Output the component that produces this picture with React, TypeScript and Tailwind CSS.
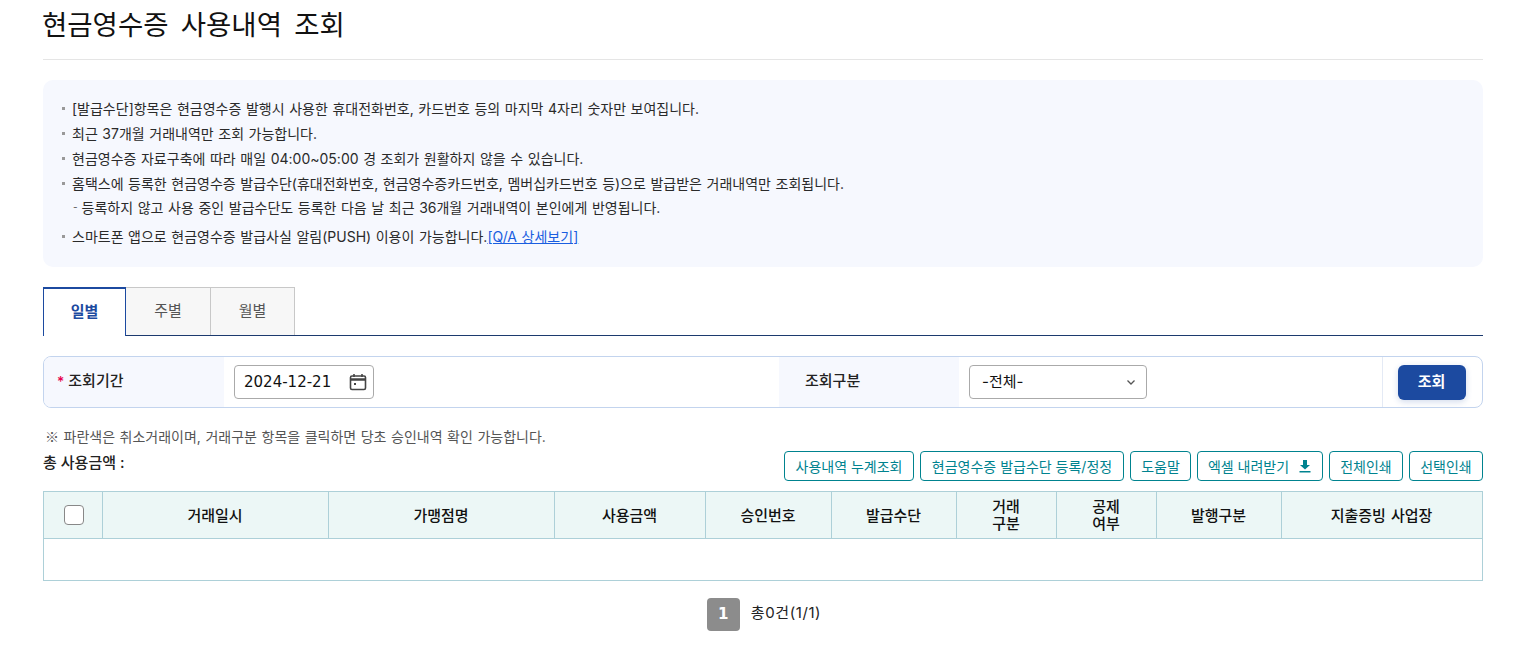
import React from "react";

const font = "font-['Inter','Noto_Sans_CJK_KR',sans-serif]";

const notices = [
  "[발급수단]항목은 현금영수증 발행시 사용한 휴대전화번호, 카드번호 등의 마지막 4자리 숫자만 보여집니다.",
  "최근 37개월 거래내역만 조회 가능합니다.",
  "현금영수증 자료구축에 따라 매일 04:00~05:00 경 조회가 원활하지 않을 수 있습니다.",
  "홈택스에 등록한 현금영수증 발급수단(휴대전화번호, 현금영수증카드번호, 멤버십카드번호 등)으로 발급받은 거래내역만 조회됩니다.",
];

function Bullet({ children, className = "" }: { children: React.ReactNode; className?: string }) {
  return (
    <li className={`flex items-center h-[25px] ${className}`}>
      <span className="w-[3px] h-[3px] bg-[#999] mr-[7px] ml-[19px]" />
      <span>{children}</span>
    </li>
  );
}

function TealButton({ children, className = "" }: { children: React.ReactNode; className?: string }) {
  return (
    <button className={`h-[30px] border border-[#00838f] rounded-[4px] bg-white text-[14px] text-[#00838f] flex items-center justify-center ${className}`}>
      {children}
    </button>
  );
}

const headers: [string, number][] = [
  ["거래일시", 226],
  ["가맹점명", 226],
  ["사용금액", 151],
  ["승인번호", 126],
  ["발급수단", 125],
  ["거래\n구분", 100],
  ["공제\n여부", 100],
  ["발행구분", 125],
  ["지출증빙 사업장", 202],
];

export default function App() {
  return (
    <div className={`${font} w-[1522px] h-[652px] overflow-hidden bg-white pl-[43px] pr-[39px] text-[#222]`}>
      <h1 className="h-[60px] border-b border-[#e5e5e5] text-[27.5px] leading-[50px] text-[#111] font-normal [word-spacing:4.5px] -indent-[1px]">현금영수증 사용내역 조회</h1>

      <ul className="mt-[20px] h-[187px] rounded-[10px] bg-[#f6f8fe] pt-[16px] text-[14px] text-[#2a2a2a] [word-spacing:0.65px]">
        {notices.map((n) => (
          <Bullet key={n}>{n}</Bullet>
        ))}
        <li className="h-[24px] -mt-[1px] flex items-center pl-[30px]">
          <span className="mr-[4px] text-[10px] text-[#555]">-</span>등록하지 않고 사용 중인 발급수단도 등록한 다음 날 최근 36개월 거래내역이 본인에게 반영됩니다.
        </li>
        <Bullet className="mt-[5px]">
          스마트폰 앱으로 현금영수증 발급사실 알림(PUSH) 이용이 가능합니다.<span className="text-[#1a5ee0] underline">[Q/A 상세보기]</span>
        </Bullet>
      </ul>

      <div className="mt-[20px] flex h-[49px] border-b border-[#1c3a6e]">
        <div className="w-[83px] h-[49px] border-x border-t-2 border-[#1c4aa0] bg-white flex items-center justify-center text-[15px] font-bold text-[#1c4aa0] -mb-px">일별</div>
        <div className="w-[85px] h-[48px] border-r border-t border-[#c8c8c8] bg-[#f7f7f7] flex items-center justify-center text-[15px] text-[#555]">주별</div>
        <div className="w-[84px] h-[48px] border-r border-t border-[#c8c8c8] bg-[#f7f7f7] flex items-center justify-center text-[15px] text-[#555]">월별</div>
      </div>

      <div className="mt-[20px] h-[52px] flex border border-[#c3d4ee] rounded-[8px] overflow-hidden text-[15px]">
        <div className="w-[180px] bg-[#f6f8fe] flex items-center pl-[13px] pb-[1px] font-medium text-[#222]">
          <span className="text-[#e6004c] mr-[4px] text-[14px]">*</span>조회기간
        </div>
        <div className="w-[555px] flex items-center pl-[10px]">
          <div className="w-[140px] h-[34px] border border-[#aaa] rounded-[4px] flex items-center justify-between pl-[9px] pr-[6px] text-[15px] text-[#111] font-['DejaVu_Sans',sans-serif]">
            2024-12-21
            <svg width="18" height="18" viewBox="0 0 18 18" fill="none" stroke="#444" strokeWidth="1.6">
              <rect x="1.5" y="3" width="15" height="13.5" rx="1.5" />
              <path d="M1.5 6.5h15" strokeWidth="2.4" />
              <path d="M5 1v3M13 1v3" />
              <rect x="5" y="10" width="2" height="2" fill="#444" stroke="none" />
            </svg>
          </div>
        </div>
        <div className="w-[180px] bg-[#f6f8fe] flex items-center pl-[26px] pb-[1px] font-medium text-[#222]">조회구분</div>
        <div className="w-[423px] flex items-center pl-[10px]">
          <div className="w-[178px] h-[34px] border border-[#aaa] rounded-[4px] flex items-center justify-between pl-[12px] pr-[10px] text-[15px] text-[#111]">
            -전체-
            <svg width="10" height="10" viewBox="0 0 10 10" fill="none" stroke="#555" strokeWidth="1.3">
              <path d="M1.5 3.5 5 7l3.5-3.5" />
            </svg>
          </div>
        </div>
        <div className="flex-1 border-l border-[#e4eaf5] pr-[2px] flex items-center justify-center">
          <button className="w-[68px] h-[35px] rounded-[6px] bg-[#1c4aa0] text-white text-[15px] font-semibold shadow-[0_2px_6px_rgba(28,74,160,0.2)]">조회</button>
        </div>
      </div>

      <p className="mt-[19px] h-[18px] leading-[18px] pl-[2px] text-[14px] text-[#555] [word-spacing:0.6px]">
        <span className="font-['Noto_Sans_CJK_KR',sans-serif]">※</span> 파란색은 취소거래이며, 거래구분 항목을 클릭하면 당초 승인내역 확인 가능합니다.
      </p>

      <div className="flex justify-between mt-[6px] h-[40px]">
        <div className="text-[15px] font-medium text-[#222] leading-[18px] pt-[3px]">총 사용금액 :</div>
        <div className="flex gap-[6px]">
          <TealButton className="w-[130px]">사용내역 누계조회</TealButton>
          <TealButton className="w-[204px]">현금영수증 발급수단 등록/정정</TealButton>
          <TealButton className="w-[61px]">도움말</TealButton>
          <TealButton className="w-[126px]">
            엑셀 내려받기
            <svg className="ml-[9px]" width="14" height="14" viewBox="0 0 14 14" fill="#00838f">
              <path d="M5 1h4v5h3L7 10.5 2 6h3z" />
              <rect x="1.5" y="12" width="11" height="1.5" />
            </svg>
          </TealButton>
          <TealButton className="w-[74px]">전체인쇄</TealButton>
          <TealButton className="w-[74px]">선택인쇄</TealButton>
        </div>
      </div>

      <div className="border border-[#add0d8]">
        <div className="flex h-[47px] bg-[#ecf7f6] border-b border-[#add0d8]">
          <div className="w-[58px] pl-[2px] flex items-center justify-center">
            <span className="w-[20px] h-[20px] rounded-[4px] border border-[#888] bg-white" />
          </div>
          {headers.map(([h, w]) => (
            <div
              key={h}
              style={{ width: w }}
              className="border-l border-[#add0d8] pr-[1px] flex items-center justify-center text-center whitespace-pre-line text-[15px] leading-[17px] font-medium text-[#111] last:flex-1 [word-spacing:1px]"
            >
              {h}
            </div>
          ))}
        </div>
        <div className="h-[41px]" />
      </div>

      <div className="mt-[17px] flex justify-center items-center gap-[11px] pl-[2px] h-[33px]">
        <span className="w-[33px] h-[33px] rounded-[4px] bg-[#8c8c8c] text-white text-[15px] font-bold flex items-center justify-center font-['DejaVu_Sans',sans-serif]">1</span>
        <span className="text-[15px] text-[#222] pb-[3px] tracking-[0.6px]">총0건(1/1)</span>
      </div>
    </div>
  );
}
